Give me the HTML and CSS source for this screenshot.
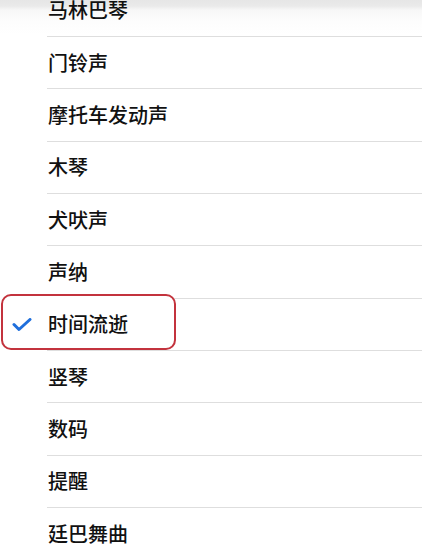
FILE: index.html
```html
<!DOCTYPE html>
<html lang="zh-CN">
<head>
<meta charset="utf-8">
<title>铃声</title>
<link rel="stylesheet" href="styles.css">
</head>
<body>
<ul class="list">
  <li class="row"><span class="label">马林巴琴</span></li>
  <li class="row"><span class="label">门铃声</span></li>
  <li class="row"><span class="label">摩托车发动声</span></li>
  <li class="row"><span class="label">木琴</span></li>
  <li class="row"><span class="label">犬吠声</span></li>
  <li class="row"><span class="label">声纳</span></li>
  <li class="row row-selected">
    <span class="highlight"></span>
    <svg class="check" viewBox="0 0 20 14" width="20" height="14" aria-hidden="true">
      <path d="M2 6.5 L7 11.5 L18 1.5" fill="none" stroke="#1f6fdc" stroke-width="3" stroke-linecap="round" stroke-linejoin="round"/>
    </svg>
    <span class="label">时间流逝</span>
  </li>
  <li class="row"><span class="label">竖琴</span></li>
  <li class="row"><span class="label">数码</span></li>
  <li class="row"><span class="label">提醒</span></li>
  <li class="row"><span class="label">廷巴舞曲</span></li>
</ul>
</body>
</html>
```
FILE: styles.css
```css
html {
  background: #ffffff;
}
body {
  margin: 0;
  height: 558px;
  overflow: hidden;
  background: linear-gradient(#e6e6e6 0, #eaeaea 6px, #f7f7f7 10px, #fdfdfd 22px, #ffffff 34px);
  font-family: "Noto Sans CJK SC", "Noto Sans", sans-serif;
  color: #111111;
}
.list {
  list-style: none;
  margin: -15.33px 0 0 0;
  padding: 0;
}
.row {
  position: relative;
  height: 52.33px;
  box-sizing: border-box;
  margin-left: 47px;
  border-bottom: 1px solid #dedede;
  display: flex;
  align-items: center;
}
.label {
  position: relative;
  font-size: 20px;
  font-weight: 500;
  line-height: 1;
  padding-left: 1px;
}
.row-selected {
  position: relative;
}
.highlight {
  position: absolute;
  left: -46px;
  top: -4.67px;
  width: 175px;
  bottom: 0;
  box-sizing: border-box;
  border: 2px solid #c3333d;
  border-radius: 10px;
  background: #ffffff;
}
.check {
  position: absolute;
  left: -35px;
  top: 50%;
  margin-top: -6px;
}
```
